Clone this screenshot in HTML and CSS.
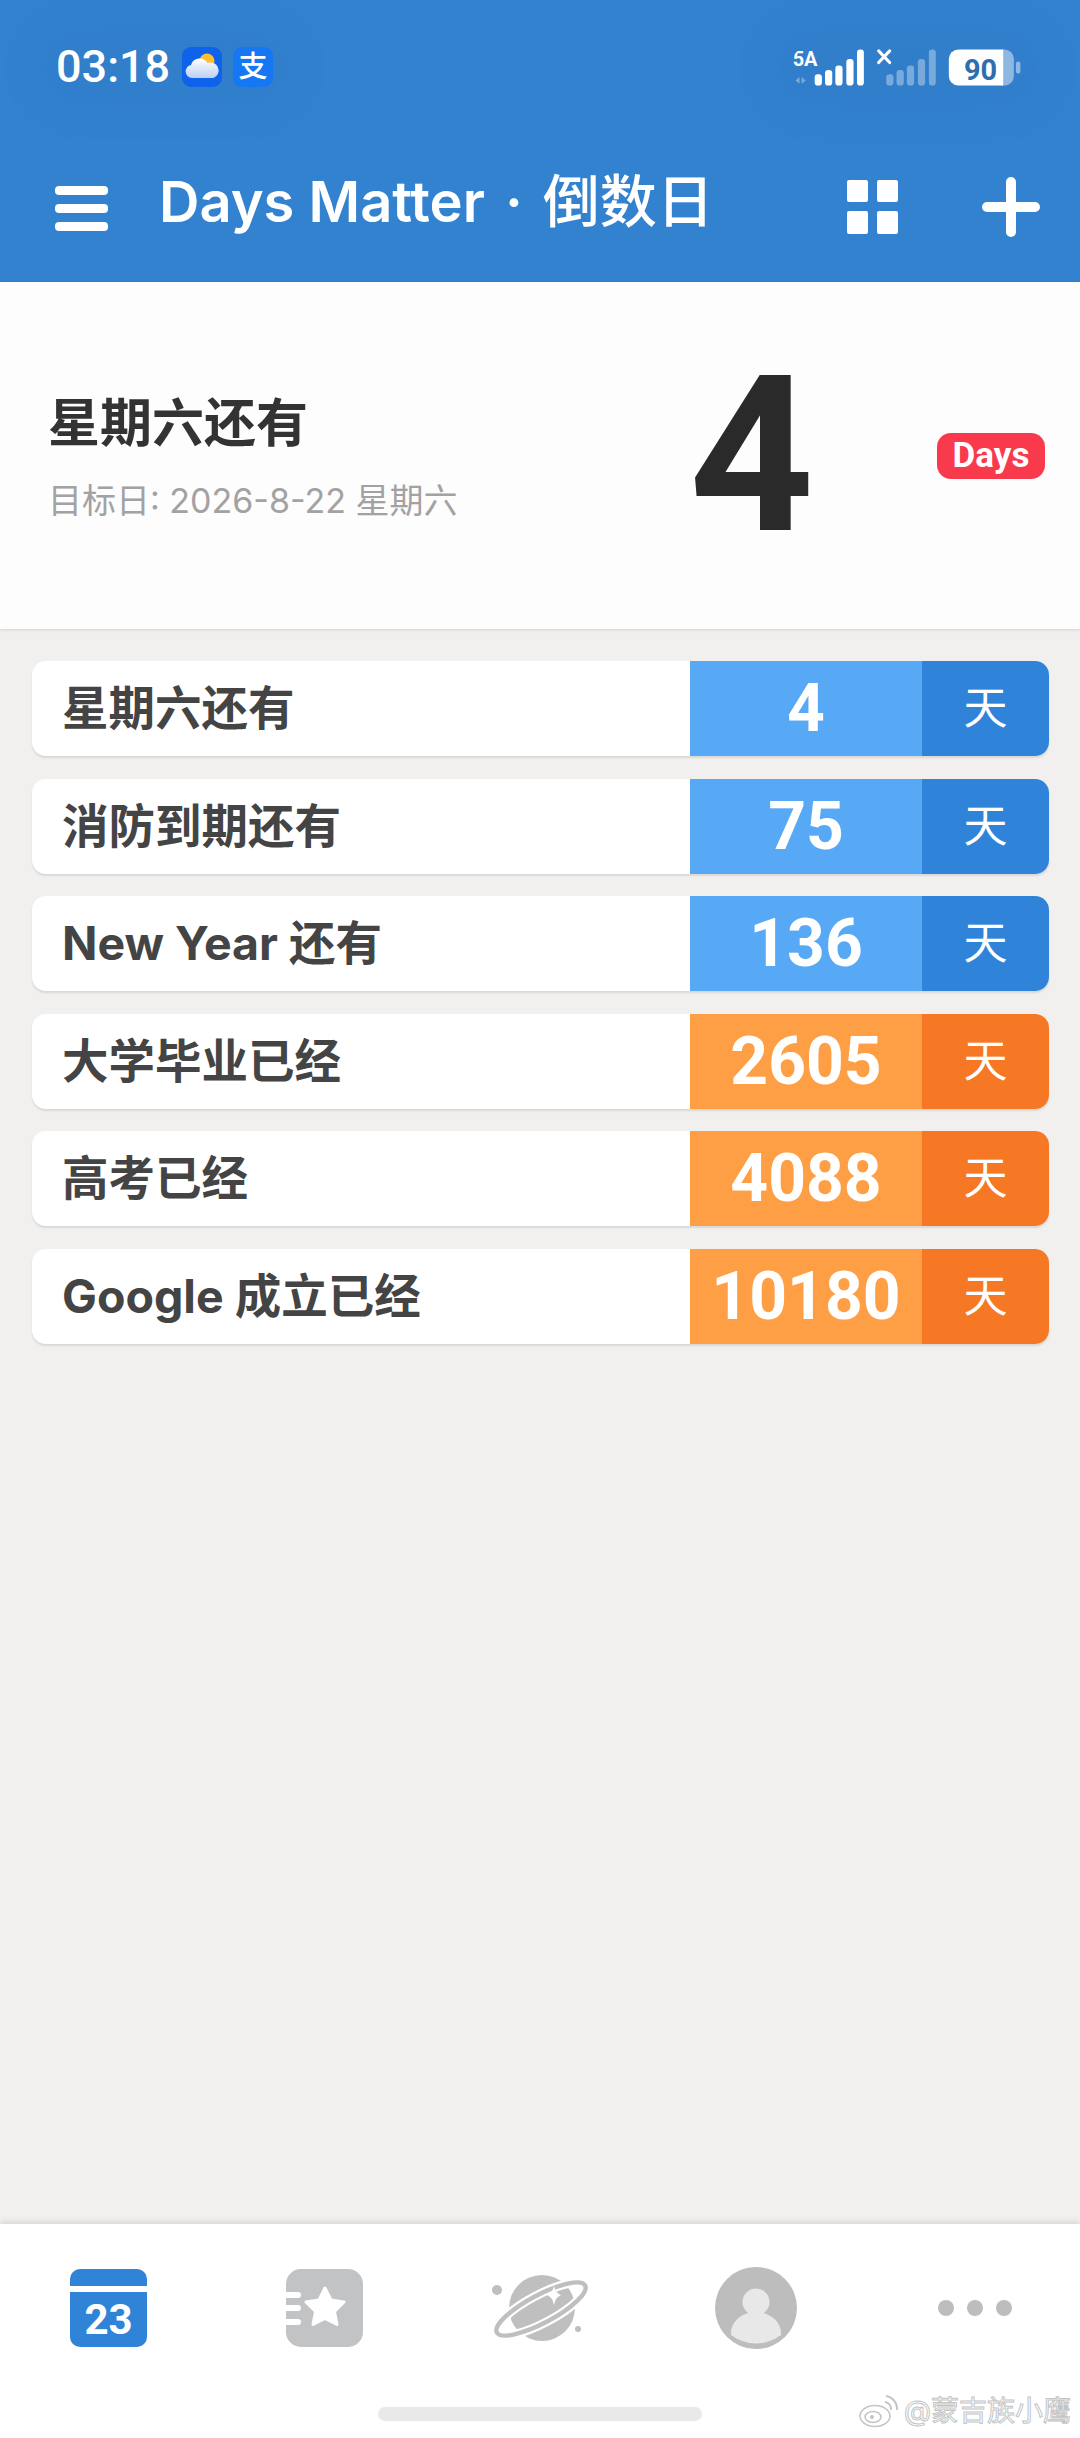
FILE: index.html
```html
<!DOCTYPE html>
<html lang="zh">
<head>
    <meta charset="UTF-8">
    <meta name="viewport" content="width=device-width, initial-scale=1.0">
    <link rel="stylesheet" href="styles.css">
</head>
<body>
    <div class="page">
        <header class="header">
            <div class="status">
                <div class="status-left">
                    <span class="time">03:18</span>
                    <svg class="app-icon" viewBox="0 0 40 40">
                        <defs>
                            <linearGradient id="cloud" x1="0" y1="0" x2="0" y2="1">
                                <stop offset="0" stop-color="#ffffff"/>
                                <stop offset="1" stop-color="#bcd0f2"/>
                            </linearGradient>
                        </defs>
                        <rect width="40" height="40" rx="9" fill="#0f62ea"/>
                        <circle cx="25" cy="14" r="7.5" fill="#ffbe32"/>
                        <path d="M10 31a6.5 6.5 0 0 1-1-12.900a9 9 0 0 1 16.500-2.100a7.500 7.500 0 0 1 6 15z" fill="url(#cloud)"/>
                    </svg>
                    <span class="alipay">支</span>
                </div>
                <svg class="status-right" viewBox="730 140 680 125">
                    <text x="734" y="198" class="sig-label">5A</text>
                    <path d="M742 240l12-10v20zM772 240l-12-10v20z" fill="#ffffff" opacity="0.35"/>
                    <g fill="#ffffff">
                        <rect x="798" y="222" width="21" height="33" rx="9"/>
                        <rect x="828" y="210" width="21" height="45" rx="9"/>
                        <rect x="858" y="197" width="21" height="58" rx="9"/>
                        <rect x="890" y="178" width="21" height="77" rx="9"/>
                        <rect x="921" y="150" width="20" height="105" rx="9"/>
                    </g>
                    <path d="M984 154l32 34M1016 154l-32 34" stroke="#ffffff" stroke-width="9" stroke-linecap="round"/>
                    <g fill="#ffffff" opacity="0.35">
                        <rect x="1006" y="222" width="21" height="33" rx="9"/>
                        <rect x="1036" y="210" width="21" height="45" rx="9"/>
                        <rect x="1066" y="197" width="21" height="58" rx="9"/>
                        <rect x="1098" y="178" width="21" height="77" rx="9"/>
                        <rect x="1130" y="150" width="20" height="105" rx="9"/>
                    </g>
                    <path d="M1340 150h10a27 27 0 0 1 27 27v51a27 27 0 0 1-27 27h-10z" fill="#ffffff" opacity="0.45"/>
                    <path d="M1216 150h130v105h-130a28 28 0 0 1-28-28v-49a28 28 0 0 1 28-28z" fill="#ffffff"/>
                    <rect x="1383" y="185" width="13" height="35" rx="6" fill="#ffffff" opacity="0.45"/>
                    <text x="1280" y="238" class="batt-label">90</text>
                </svg>
            </div>
            <div class="toolbar">
                <div class="menu-icon"><span></span><span></span><span></span></div>
                <h1 class="title">Days Matter<span class="title-dot">·</span><span class="title-cn">倒数日</span></h1>
                <div class="grid-icon"><span></span><span></span><span></span><span></span></div>
                <svg class="plus-icon" viewBox="0 0 58 60">
                    <path d="M29 5v50M5 30h48" stroke="#ffffff" stroke-width="10" stroke-linecap="round"/>
                </svg>
            </div>
        </header>

        <section class="hero">
            <div class="hero-text">
                <div class="hero-title">星期六还有</div>
                <div class="hero-sub">目标日: 2026-8-22 星期六</div>
            </div>
            <div class="hero-num">4</div>
            <div class="hero-badge">Days</div>
        </section>

        <main class="list">
            <div class="row">
                <div class="row-label">星期六还有</div>
                <div class="row-num">4</div>
                <div class="row-unit">天</div>
            </div>
            <div class="row">
                <div class="row-label">消防到期还有</div>
                <div class="row-num">75</div>
                <div class="row-unit">天</div>
            </div>
            <div class="row">
                <div class="row-label">New Year 还有</div>
                <div class="row-num">136</div>
                <div class="row-unit">天</div>
            </div>
            <div class="row past">
                <div class="row-label">大学毕业已经</div>
                <div class="row-num">2605</div>
                <div class="row-unit">天</div>
            </div>
            <div class="row past">
                <div class="row-label">高考已经</div>
                <div class="row-num">4088</div>
                <div class="row-unit">天</div>
            </div>
            <div class="row past">
                <div class="row-label">Google 成立已经</div>
                <div class="row-num">10180</div>
                <div class="row-unit">天</div>
            </div>
        </main>

        <nav class="tabbar">
            <div class="tabs">
                <div class="tab">
                    <svg class="tab-cal" viewBox="0 0 77 78">
                        <path d="M10 0h57a10 10 0 0 1 10 10v7h-77v-7a10 10 0 0 1 10-10z" fill="#2f84d8"/>
                        <path d="M0 23h77v45a10 10 0 0 1-10 10h-57a10 10 0 0 1-10-10z" fill="#2f84d8"/>
                        <text x="38.500" y="65" class="cal-label">23</text>
                    </svg>
                </div>
                <div class="tab">
                    <svg class="tab-book" viewBox="0 0 77 78">
                        <rect width="77" height="78" rx="15" fill="#c2c3c5"/>
                        <path d="M0 23h12a3 3 0 0 1 0 6h-12zM0 36h12a3 3 0 0 1 0 6h-12zM0 50h12a3 3 0 0 1 0 6h-12z" fill="#ffffff"/>
                        <path d="M39 19l6 12 13 2-9.500 9.500 2.500 13-12-6-12 6 2.500-13-9.500-9.500 13-2z" fill="#ffffff" stroke="#ffffff" stroke-width="3" stroke-linejoin="round"/>
                    </svg>
                </div>
                <div class="tab">
                    <svg class="tab-planet" viewBox="0 0 96 68">
                        <circle cx="50" cy="34" r="33" fill="#bfbfbf"/>
                        <ellipse cx="49" cy="35" rx="50" ry="14" transform="rotate(-28 49 35)" fill="none" stroke="#ffffff" stroke-width="9"/>
                        <ellipse cx="49" cy="35" rx="50" ry="14" transform="rotate(-28 49 35)" fill="none" stroke="#bfbfbf" stroke-width="4.500"/>
                        <path d="M62 12q1.500 7 7 9q-5.500 2-7 10q-1.500-8-7-10q5.500-2 7-9z" fill="#ffffff"/>
                        <circle cx="5" cy="16" r="5" fill="#bfbfbf"/>
                        <circle cx="86" cy="55" r="3" fill="#bfbfbf"/>
                    </svg>
                </div>
                <div class="tab">
                    <svg class="tab-avatar" viewBox="0 0 82 82">
                        <circle cx="41" cy="41" r="41" fill="#bdbdbd"/>
                        <circle cx="41" cy="35" r="13.500" fill="#e8e8e8"/>
                        <path d="M16 68c-1-14 12-23 25-23s26 9 25 23a41 41 0 0 1-50 0z" fill="#e8e8e8"/>
                    </svg>
                </div>
                <div class="tab tab-more"><span></span><span></span><span></span></div>
            </div>
            <div class="home-bar"></div>
            <div class="watermark">
                <svg class="wm-logo" viewBox="0 0 40 34">
                    <ellipse cx="16" cy="22" rx="15" ry="10.500" fill="#ffffff" stroke="#c4c4c4" stroke-width="1.500"/>
                    <ellipse cx="14" cy="23" rx="8" ry="5.500" fill="none" stroke="#c4c4c4" stroke-width="1.500"/>
                    <circle cx="13" cy="23" r="2" fill="#c4c4c4"/>
                    <path d="M26 8a7 7 0 0 1 6 8M27 2a13 13 0 0 1 11 14" fill="none" stroke="#c4c4c4" stroke-width="2"/>
                </svg>
                <span class="wm-text">@蒙吉族小鹰</span>
            </div>
        </nav>
    </div>
</body>
</html>
```

FILE: styles.css
```css
* {
    box-sizing: border-box;
    margin: 0;
    padding: 0;
}

body {
    background: #f1f0ef;
    font-family: 'Inter', 'Noto Sans CJK SC', sans-serif;
}

.page {
    display: flex;
    flex-direction: column;
    width: 1080px;
    height: 2438px;
    overflow: hidden;
}

/* top blue area */
.header {
    height: 282px;
    background: #3282d0;
    color: #fff;
}

.status {
    display: flex;
    align-items: center;
    justify-content: space-between;
    height: 134px;
    padding: 0 55px 0 56px;
}

.status-left {
    display: flex;
    align-items: center;
    border-radius: 30px;
    background: rgba(44, 110, 178, 0.2);
    box-shadow: 0 0 40px 16px rgba(44, 110, 178, 0.2);
}

.time {
    width: 126px;
    font-family: 'Roboto', sans-serif;
    font-size: 45px;
    font-weight: 500;
    line-height: 40px;
}

.app-icon {
    width: 40px;
    height: 40px;
}

.alipay {
    display: flex;
    align-items: center;
    justify-content: center;
    width: 40px;
    height: 40px;
    margin-left: 11px;
    border-radius: 9px;
    background: #1677f5;
    font-size: 29px;
    font-weight: 500;
    line-height: 40px;
}

.status-right {
    width: 234.5px;
    height: 43px;
    border-radius: 20px;
    background: rgba(44, 110, 178, 0.2);
    box-shadow: 0 0 40px 16px rgba(44, 110, 178, 0.2);
}

.sig-label {
    font-family: 'Roboto', sans-serif;
    font-size: 58px;
    font-weight: 700;
    fill: #fff;
}

.batt-label {
    font-family: 'Roboto', sans-serif;
    font-size: 84px;
    font-weight: 700;
    text-anchor: middle;
    fill: #2d6db0;
}

.toolbar {
    display: flex;
    align-items: center;
    height: 148px;
    padding: 0 40px 0 55px;
}

.menu-icon {
    display: flex;
    flex-direction: column;
    gap: 9px;
    width: 53px;
}

.menu-icon span {
    height: 9px;
    border-radius: 4px;
    background: #fff;
}

.title {
    flex: 1;
    margin: -12px 0 0 51px;
    font-size: 56px;
    font-weight: 600;
    line-height: 70px;
    white-space: nowrap;
}

.title-dot {
    margin: 0 20px;
}

.title-cn {
    font-size: 57px;
    font-weight: 500;
}

.grid-icon {
    display: grid;
    grid-template-columns: 21px 21px;
    grid-auto-rows: 22.5px;
    gap: 9px;
    margin: -3px 84px 0 0;
}

.grid-icon span {
    border-radius: 2px;
    background: #fff;
}

.plus-icon {
    width: 58px;
    height: 60px;
    margin-top: -3px;
}

/* today's summary */
.hero {
    display: flex;
    align-items: center;
    height: 347px;
    padding: 0 35px 0 48px;
    background: #fdfdfd;
    box-shadow: 0 1px 3px rgba(0, 0, 0, 0.12);
}

.hero-text {
    width: 641px;
    margin-top: -2px;
}

.hero-title {
    font-size: 52px;
    font-weight: 700;
    line-height: 70px;
    color: #333;
}

.hero-sub {
    margin-top: 22px;
    font-size: 34px;
    line-height: 40px;
    color: #a2a2a2;
}

.hero-num {
    font-family: 'Roboto', sans-serif;
    font-size: 218px;
    font-weight: 700;
    line-height: 220px;
    color: #2a2a2a;
}

.hero-badge {
    width: 108px;
    height: 46px;
    margin-left: auto;
    border-radius: 14px;
    background: #f9394c;
    color: #fff;
    font-family: 'Roboto', sans-serif;
    font-size: 35px;
    font-weight: 700;
    line-height: 46px;
    text-align: center;
}

/* countdown rows */
.list {
    display: flex;
    flex: 1;
    flex-direction: column;
    gap: 22.5px;
    padding: 32px 31px 0 32px;
}

.row {
    display: flex;
    height: 95px;
    overflow: hidden;
    border-radius: 14px;
    background: #fff;
    box-shadow: 0 2px 2px rgba(0, 0, 0, 0.1);
}

.row-label {
    flex: 1;
    padding-left: 30px;
    font-size: 46.5px;
    font-weight: 700;
    line-height: 95px;
    color: #444;
}

.row-num {
    width: 232px;
    background: #57a8f5;
    color: #fff;
    font-family: 'Roboto', sans-serif;
    font-size: 66px;
    font-weight: 700;
    line-height: 95px;
    text-align: center;
}

.row-unit {
    width: 127px;
    background: #2f84da;
    color: #fff;
    font-size: 44px;
    line-height: 95px;
    text-align: center;
}

.past .row-num {
    background: #ff9f45;
}

.past .row-unit {
    background: #f67724;
}

/* bottom tabs */
.tabbar {
    position: relative;
    display: flex;
    flex-direction: column;
    align-items: center;
    height: 214px;
    background: #fff;
    box-shadow: 0 -2px 6px rgba(0, 0, 0, 0.12);
}

.tabs {
    display: grid;
    grid-template-columns: repeat(5, 216px);
    align-items: center;
    height: 168px;
}

.tab {
    display: flex;
    align-items: center;
    justify-content: center;
}

.tab-cal,
.tab-book {
    width: 77px;
    height: 78px;
}

.cal-label {
    font-family: 'Roboto', sans-serif;
    font-size: 42px;
    font-weight: 700;
    text-anchor: middle;
    fill: #fff;
}

.tab-planet {
    width: 96px;
    height: 68px;
}

.tab-avatar {
    width: 82px;
    height: 82px;
}

.tab-more {
    gap: 13px;
    padding-left: 5px;
}

.tab-more span {
    width: 16px;
    height: 16px;
    border-radius: 50%;
    background: #bdbdbd;
}

.home-bar {
    width: 324px;
    height: 14px;
    margin-top: 15px;
    border-radius: 7px;
    background: #e9e9e9;
}

.watermark {
    position: absolute;
    right: 9px;
    bottom: 10px;
    display: flex;
    align-items: center;
    gap: 5px;
}

.wm-logo {
    width: 40px;
    height: 34px;
}

.wm-text {
    font-size: 28px;
    line-height: 34px;
    color: #fff;
    -webkit-text-stroke: 1px #c4c4c4;
}
```
